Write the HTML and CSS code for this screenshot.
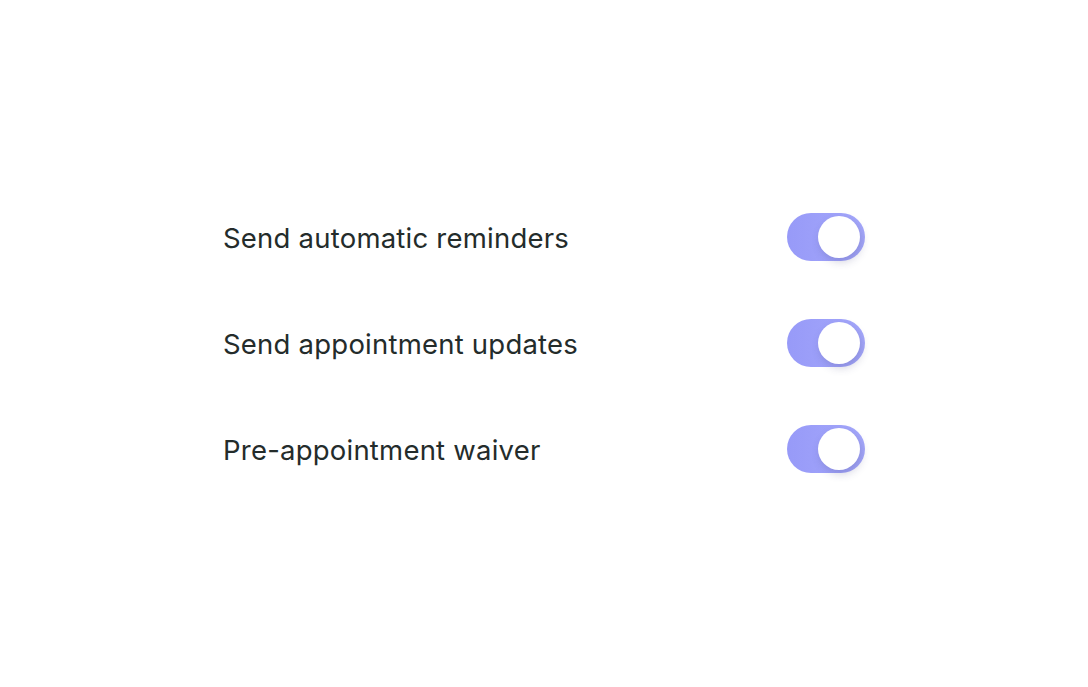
FILE: index.html
```html
<!DOCTYPE html>
<html lang="en">
<head>
    <meta charset="UTF-8">
    <title>Appointment settings</title>
    <link rel="stylesheet" href="styles.css">
</head>
<body>
    <div class="ajustes">
        <div class="fila">
            <span class="etiqueta">Send automatic reminders</span>
            <button class="toggle activo" aria-pressed="true"><span class="perilla"></span></button>
        </div>
        <div class="fila">
            <span class="etiqueta">Send appointment updates</span>
            <button class="toggle activo" aria-pressed="true"><span class="perilla"></span></button>
        </div>
        <div class="fila">
            <span class="etiqueta">Pre-appointment waiver</span>
            <button class="toggle activo" aria-pressed="true"><span class="perilla"></span></button>
        </div>
    </div>
</body>
</html>
```

FILE: styles.css
```css
html, body {
    margin: 0;
    height: 100%;
}
body {
    font-family: Inter, "Noto Sans", sans-serif;
    background: #fff;
    color: #242c2b;
}
.ajustes {
    width: 642px;
    margin: 0 auto;
    padding-top: 213px;
    display: flex;
    flex-direction: column;
    gap: 58px;
}
.fila {
    display: flex;
    align-items: center;
    justify-content: space-between;
    height: 48px;
}
.etiqueta {
    font-size: 27.5px;
    letter-spacing: 0.22px;
    padding-top: 2px;
}
.toggle {
    width: 78px;
    height: 48px;
    border: none;
    border-radius: 24px;
    padding: 0 5px 0 0;
    background: linear-gradient(90deg, #979af8 0%, #a5a8fb 100%);
    display: flex;
    align-items: center;
    justify-content: flex-end;
    box-sizing: border-box;
    cursor: pointer;
}
.perilla {
    width: 42px;
    height: 42px;
    border-radius: 50%;
    background: #fff;
    box-shadow: 2px 4px 8px rgba(60, 60, 120, 0.22);
}
```
